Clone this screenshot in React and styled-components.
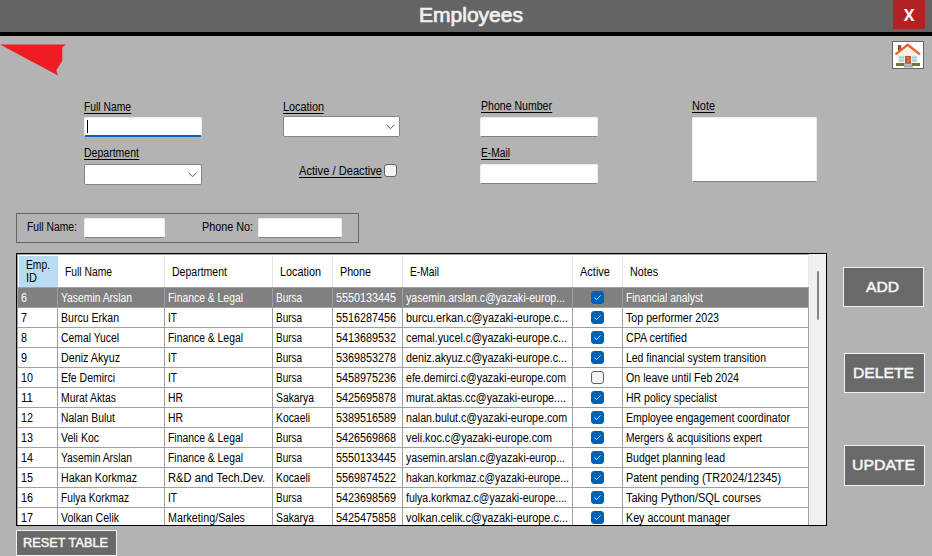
import React, { useLayoutEffect, useRef } from 'react';
import styled, { createGlobalStyle } from 'styled-components';

const GlobalStyle = createGlobalStyle`
  *, *::before, *::after { box-sizing: border-box; }
  html, body { margin: 0; background: #b3b3b3; overflow: hidden; }
  body { font: 12px/16px "Liberation Sans", Arial, sans-serif; color: #000; }
`;

const Window = styled.div`
  width: 932px;
  height: 556px;
  overflow: hidden;
  background: #b3b3b3;
`;

const TitleBar = styled.header`
  display: grid;
  grid-template-columns: 1fr 32px 7px;
  height: 36px;
  background: #646464;
  border-bottom: 4px solid #000;
`;

const Title = styled.h1`
  margin: 0;
  padding: 1px 0 0 419px;
  font-size: 19.5px;
  font-weight: 400;
  line-height: 29px;
  color: #f0f0f0;
  -webkit-text-stroke: 0.7px #f0f0f0;
`;

const CloseButton = styled.button`
  height: 29px;
  padding: 2px 0 0;
  border: 0;
  background: #b22222;
  color: #fff;
  font: bold 16px/27px "Open Sans", sans-serif;
`;

const Toolbar = styled.div`
  display: flex;
  justify-content: space-between;
  align-items: flex-start;
  height: 63px;
  padding: 5px 8px 0 0;
`;

const Logo = styled.svg`
  display: block;
  margin-top: 3px;
`;

const HomeButton = styled.button`
  display: block;
  width: 32px;
  height: 28px;
  padding: 0;
  border: 1px solid #646464;
  background: #fff;
  svg { display: block; }
`;

const Form = styled.form`
  display: grid;
  grid-template-columns: 199px 197px 212px 125px;
  height: 114px;
  padding-left: 84px;
`;

const Column = styled.div`
  display: flex;
  flex-direction: column;
  align-items: flex-start;
`;

const Field = styled.div`
  display: flex;
  flex-direction: column;
  align-items: flex-start;
  height: 47px;
`;

const Label = styled.label`
  display: block;
  height: ${(p) => p.$height || 18}px;
  margin-left: ${(p) => p.$shift || 0}px;
  padding-top: ${(p) => p.$drop || 0}px;
  line-height: 15px;
  span { border-bottom: 1px solid #000; height: 14px; line-height: 15px; }
`;

const TextBox = styled.div`
  width: ${(p) => p.$width}px;
  height: ${(p) => p.$height || 20}px;
  padding: 2px 0 0 2px;
  border: 1px solid #ececec;
  border-bottom: ${(p) => (p.$focused ? '2px solid #0067c0' : '1px solid #808080')};
  border-radius: 2px;
  background: #fff;
`;

const Caret = styled.div`
  width: 1px;
  height: 13px;
  background: #000;
`;

const SelectBox = styled.div`
  display: flex;
  justify-content: flex-end;
  align-items: center;
  width: ${(p) => p.$width}px;
  height: 21px;
  padding-right: 4px;
  border: 1px solid #868686;
  border-radius: 2px;
  background: #fff;
`;

const CheckLine = styled.div`
  display: flex;
  align-items: flex-start;
  gap: 2px;
  padding: 18px 0 0 16px;
`;

const Box = styled.span`
  display: flex;
  width: 13px;
  height: 13px;
  border: 1px solid ${(p) => (p.$on ? '#005fb8' : '#626262')};
  border-radius: 3px;
  background: ${(p) => (p.$on ? '#005fb8' : '#f3f3f3')};
`;

const SearchPanel = styled.div`
  display: grid;
  grid-template-columns: 57px 118px 56px 1fr;
  width: 343px;
  height: 30px;
  margin-left: 16px;
  padding: 4px 0 0 10px;
  border: 1px solid #646464;
`;

const SearchLabel = styled.span`
  padding-top: 1px;
`;

const Body = styled.main`
  display: flex;
  align-items: flex-start;
  height: 273px;
  margin: 10px 0 4px 16px;
`;

const Grid = styled.div`
  display: flex;
  width: 811px;
  height: 273px;
  border: 1px solid #000;
  background: #fff;
  overflow: hidden;
`;

const Rows = styled.div`
  width: 792px;
  border-top: 1px solid #a0a0a0;
  border-left: 1px solid #a0a0a0;
`;

const Row = styled.div`
  display: grid;
  grid-template-columns: 40px 107px 108px 60px 70px 170px 50px 186px;
  height: 20px;
  background: ${(p) => (p.$selected ? '#808080' : '#fff')};
  color: ${(p) => (p.$selected ? '#fff' : '#000')};
`;

const Cell = styled.div`
  display: flex;
  align-items: center;
  justify-content: ${(p) => (p.$center ? 'center' : 'flex-start')};
  min-width: 0;
  padding-left: ${(p) => (p.$center ? 0 : 3)}px;
  border-right: 1px solid #a0a0a0;
  border-bottom: 1px solid #a0a0a0;
  overflow: hidden;
`;

const HeaderRow = styled(Row)`
  height: 33px;
  border-bottom: 1px solid #a0a0a0;
`;

const HeaderCell = styled.div`
  display: flex;
  flex-direction: column;
  justify-content: center;
  align-items: flex-start;
  margin-top: 1px;
  padding: 1px 0 0 7px;
  border-right: 1px solid #e5e5e5;
  line-height: 13px;
  ${(p) => p.$current && 'background: #b9dcf4; margin-left: 1px; border-right-color: #b9dcf4;'}
`;

const ScrollTrack = styled.div`
  flex: 1;
  padding: 17px 0 0 8px;
  background: #f0f0f0;
`;

const ScrollThumb = styled.div`
  width: 2px;
  height: 49px;
  border-radius: 1px;
  background: #858585;
`;

const Actions = styled.div`
  display: flex;
  flex-direction: column;
  padding: 14px 0 0 16px;
`;

const ActionButton = styled.button`
  display: flex;
  align-items: center;
  justify-content: center;
  width: ${(p) => p.$width || 81}px;
  height: ${(p) => p.$height || 40}px;
  margin: ${(p) => p.$margin || 0};
  padding: 0 2px 1px 0;
  border: 1px solid #f0f0f0;
  background: #696969;
  color: #f5f5f5;
  font: ${(p) => p.$size || 14.5}px "Liberation Sans", Arial, sans-serif;
  -webkit-text-stroke: 0.5px #f5f5f5;
`;

const TextRun = styled.span`
  display: inline-block;
  flex: none;
  white-space: nowrap;
  transform-origin: 0 50%;
`;

const TextSlot = styled.div`
  display: flex;
  flex: none;
`;

/* Condenses a run of text horizontally to a given pixel width. */
function Fit({ w, children }) {
  const run = useRef(null);
  const slot = useRef(null);
  useLayoutEffect(() => {
    run.current.style.transform = 'none';
    run.current.style.transform = `scaleX(${w / run.current.getBoundingClientRect().width})`;
    slot.current.style.width = `${w}px`;
  }, [w, children]);
  return (
    <TextSlot ref={slot}>
      <TextRun ref={run}>{children}</TextRun>
    </TextSlot>
  );
}

function Checkbox({ on }) {
  return (
    <Box $on={on}>
      {on && (
        <svg width="11" height="11" viewBox="0 0 11 11">
          <path d="M2.5 5.5 4.5 7.5 8.5 3.5" fill="none" stroke="#fff" strokeWidth=".9" />
        </svg>
      )}
    </Box>
  );
}

function Select({ width }) {
  return (
    <SelectBox $width={width}>
      <svg width="9" height="6" viewBox="0 0 9 6">
        <path d="M.5 .7 4.5 4.7 8.5 .7" fill="none" stroke="#555" strokeWidth="1" />
      </svg>
    </SelectBox>
  );
}

function House() {
  return (
    <svg width="30" height="26" viewBox="0 0 30 26">
      <path d="M5 3h3.2v6H5z" fill="#914b35" />
      <path d="M5 11 14.7 3 24.5 11v11H5z" fill="#fbf0dc" />
      <path d="M6 14.5h5v5H6zM19 14.5h5v5h-5z" fill="#9bcbd8" />
      <path d="M6 17h5M19 17h5" stroke="#f6fafa" strokeWidth=".8" />
      <path d="M2.5 12.4 14.7 2.8 27 12.4" fill="none" stroke="#e5622e" strokeWidth="2.3" />
      <path d="M3 21h8.5v3H3zM18.5 21H27v3h-8.5z" fill="#61813a" />
      <path d="M12 14h6v8h-6z" fill="#b7523a" />
      <path d="M13.5 15.3h2.6v2h-2.6zM13.5 18.6h2.6v2h-2.6z" fill="#d47b5c" />
      <path d="M16.4 17.4h1.1v1.1h-1.1z" fill="#efcf4b" />
      <path d="M11.5 21.7h7.5v1.8h-7.5z" fill="#bbb" />
      <path d="M10.8 23.5h9v1.9h-9z" fill="#999" />
    </svg>
  );
}

const NAMES = { 'Yasemin Arslan': 71, 'Burcu Erkan': 58, 'Cemal Yucel': 58, 'Deniz Akyuz': 59, 'Efe Demirci': 54, 'Murat Aktas': 55, 'Nalan Bulut': 54, 'Veli Koc': 38, 'Hakan Korkmaz': 76, 'Fulya Korkmaz': 68, 'Volkan Celik': 58 };
const DEPARTMENTS = { 'Finance & Legal': 75, IT: 9, HR: 15, 'R&D and Tech.Dev.': 97, 'Marketing/Sales': 77 };
const LOCATIONS = { Bursa: 26, Sakarya: 38, Kocaeli: 34 };

const EMPLOYEES = [
  [6, 'Yasemin Arslan', 'Finance & Legal', 'Bursa', '5550133445', 'yasemin.arslan.c@yazaki-europ...', 159, true, 'Financial analyst', 77],
  [7, 'Burcu Erkan', 'IT', 'Bursa', '5516287456', 'burcu.erkan.c@yazaki-europe.c...', 162, true, 'Top performer 2023', 93],
  [8, 'Cemal Yucel', 'Finance & Legal', 'Bursa', '5413689532', 'cemal.yucel.c@yazaki-europe.c...', 161, true, 'CPA certified', 61],
  [9, 'Deniz Akyuz', 'IT', 'Bursa', '5369853278', 'deniz.akyuz.c@yazaki-europe.c...', 161, true, 'Led financial system transition', 140],
  [10, 'Efe Demirci', 'IT', 'Bursa', '5458975236', 'efe.demirci.c@yazaki-europe.com', 160, false, 'On leave until Feb 2024', 113],
  [11, 'Murat Aktas', 'HR', 'Sakarya', '5425695878', 'murat.aktas.cc@yazaki-europe....', 160, true, 'HR policy specialist', 91],
  [12, 'Nalan Bulut', 'HR', 'Kocaeli', '5389516589', 'nalan.bulut.c@yazaki-europe.com', 161, true, 'Employee engagement coordinator', 164],
  [13, 'Veli Koc', 'Finance & Legal', 'Bursa', '5426569868', 'veli.koc.c@yazaki-europe.com', 146, true, 'Mergers & acquisitions expert', 136],
  [14, 'Yasemin Arslan', 'Finance & Legal', 'Bursa', '5550133445', 'yasemin.arslan.c@yazaki-europ...', 159, true, 'Budget planning lead', 99],
  [15, 'Hakan Korkmaz', 'R&D and Tech.Dev.', 'Kocaeli', '5569874522', 'hakan.korkmaz.c@yazaki-europe...', 163, true, 'Patent pending (TR2024/12345)', 155],
  [16, 'Fulya Korkmaz', 'IT', 'Bursa', '5423698569', 'fulya.korkmaz.c@yazaki-europe....', 161, true, 'Taking Python/SQL courses', 135],
  [17, 'Volkan Celik', 'Marketing/Sales', 'Sakarya', '5425475858', 'volkan.celik.c@yazaki-europe.c...', 162, true, 'Key account manager', 104],
];

const HEADERS = [['Full Name', 47], ['Department', 55], ['Location', 41], ['Phone', 31], ['E-Mail', 29], ['Active', 30], ['Notes', 28]];

export default function App() {
  return (
    <Window>
      <GlobalStyle />
      <TitleBar>
        <Title><Fit w={104}>Employees</Fit></Title>
        <CloseButton>X</CloseButton>
      </TitleBar>
      <Toolbar>
        <Logo width="67" height="33" viewBox="0 0 67 33">
          <path d="M0 .5H66L62.3 3.2V16.5L56.3 26.5 58 31.5Z" fill="#ee1c24" />
        </Logo>
        <HomeButton aria-label="Home"><House /></HomeButton>
      </Toolbar>
      <Form>
        <Column>
          <Field>
            <Label $drop={1}><Fit w={47}>Full Name</Fit></Label>
            <TextBox $width={118} $focused><Caret /></TextBox>
          </Field>
          <Field>
            <Label $shift={0}><Fit w={55}>Department</Fit></Label>
            <Select width={118} />
          </Field>
        </Column>
        <Column>
          <Field>
            <Label $height={17} $drop={1}><Fit w={41}>Location</Fit></Label>
            <Select width={117} />
          </Field>
          <CheckLine>
            <Label><Fit w={83}>Active / Deactive</Fit></Label>
            <Checkbox />
          </CheckLine>
        </Column>
        <Column>
          <Field>
            <Label $shift={1}><Fit w={71}>Phone Number</Fit></Label>
            <TextBox $width={118} />
          </Field>
          <Field>
            <Label $shift={1}><Fit w={29}>E-Mail</Fit></Label>
            <TextBox $width={118} />
          </Field>
        </Column>
        <Column>
          <Label><Fit w={23}>Note</Fit></Label>
          <TextBox $width={125} $height={65} />
        </Column>
      </Form>
      <SearchPanel>
        <SearchLabel><Fit w={50}>Full Name:</Fit></SearchLabel>
        <TextBox $width={81} />
        <SearchLabel><Fit w={51}>Phone No:</Fit></SearchLabel>
        <TextBox $width={84} />
      </SearchPanel>
      <Body>
        <Grid>
          <Rows>
            <HeaderRow>
              <HeaderCell $current><Fit w={24}>Emp.</Fit><Fit w={11}>ID</Fit></HeaderCell>
              {HEADERS.map(([text, width]) => (
                <HeaderCell key={text}><Fit w={width}>{text}</Fit></HeaderCell>
              ))}
            </HeaderRow>
            {EMPLOYEES.map(([id, name, dept, place, phone, mail, mailWidth, active, note, noteWidth]) => (
              <Row key={id} $selected={id === 6}>
                <Cell><Fit w={id > 9 ? 12 : 6}>{id}</Fit></Cell>
                <Cell><Fit w={NAMES[name]}>{name}</Fit></Cell>
                <Cell><Fit w={DEPARTMENTS[dept]}>{dept}</Fit></Cell>
                <Cell><Fit w={LOCATIONS[place]}>{place}</Fit></Cell>
                <Cell><Fit w={60}>{phone}</Fit></Cell>
                <Cell><Fit w={mailWidth}>{mail}</Fit></Cell>
                <Cell $center><Checkbox on={active} /></Cell>
                <Cell><Fit w={noteWidth}>{note}</Fit></Cell>
              </Row>
            ))}
          </Rows>
          <ScrollTrack><ScrollThumb /></ScrollTrack>
        </Grid>
        <Actions>
          <ActionButton><Fit w={33}>ADD</Fit></ActionButton>
          <ActionButton $margin="46px 0 0 1px"><Fit w={61}>DELETE</Fit></ActionButton>
          <ActionButton $margin="52px 0 0 1px" $height={41}><Fit w={63}>UPDATE</Fit></ActionButton>
        </Actions>
      </Body>
      <ActionButton $width={101} $height={26} $size={12.5} $margin="0 0 0 16px"><Fit w={85}>RESET TABLE</Fit></ActionButton>
    </Window>
  );
}
